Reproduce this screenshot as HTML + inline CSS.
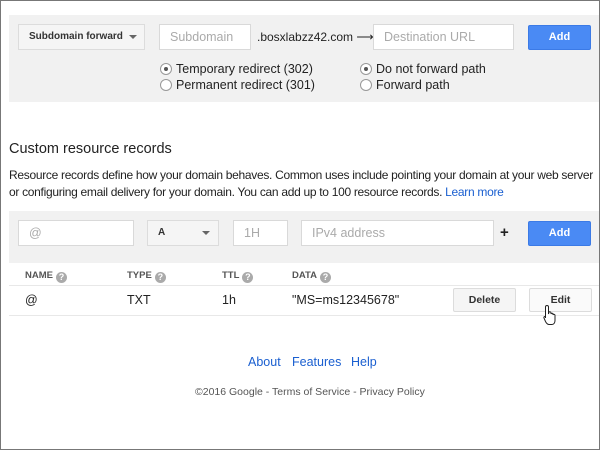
<html><head><style>
*{margin:0;padding:0;box-sizing:border-box}
body{width:600px;height:450px;background:#fff;font-family:"Liberation Sans",Arial,sans-serif;color:#222;position:relative;overflow:hidden}
.frame{position:absolute;left:0;top:0;width:600px;height:450px;border:1px solid #777;pointer-events:none}
.a{position:absolute}
.panel{background:#f1f1f1}
.inp{background:#fff;border:1px solid #d9d9d9;color:#aaa;font-size:12.5px;padding-left:10px;line-height:24px;white-space:nowrap}
.sel{background:#f5f5f5;border:1px solid #dcdcdc;font-size:10px;font-weight:bold;padding-left:10px;line-height:24px;color:#333;white-space:nowrap}
.btn{background:#4a8af4;border:1px solid #3b7ae6;color:#fff;font-size:11px;font-weight:bold;text-align:center;line-height:23px;border-radius:2px}
.gbtn{background:#f5f5f5;border:1px solid #dcdcdc;font-size:10.5px;font-weight:bold;text-align:center;line-height:23px;border-radius:2px;color:#333}
.caret{position:absolute;width:0;height:0;border-left:4px solid transparent;border-right:4px solid transparent;border-top:4px solid #666}
.t{font-size:12.5px;white-space:nowrap}
.r{position:absolute;width:12px;height:12px;border-radius:50%;border:1px solid #999;background:#fff}
.r.on::after{content:"";position:absolute;left:3px;top:3px;width:4px;height:4px;border-radius:50%;background:#555}
.h{font-size:9.5px;font-weight:bold;color:#555;white-space:nowrap}
.q{display:inline-block;width:11px;height:11px;border-radius:50%;background:#aaa;color:#fff;font-size:9px;text-align:center;line-height:11px;vertical-align:-2px;margin-left:3px}
a{color:#1a5fd0;text-decoration:none}
</style></head><body>
<div class="a panel" style="left:9px;top:15px;width:591px;height:87px"></div>
<div class="a sel" style="left:18px;top:24px;width:127px;height:26px">Subdomain forward<span class="caret" style="left:110px;top:10px"></span></div>
<div class="a inp" style="left:159px;top:24px;width:92px;height:26px">Subdomain</div>
<div class="a t" style="left:257px;top:30px;font-size:12px">.bosxlabzz42.com ⟶</div>
<div class="a inp" style="left:373px;top:24px;width:141px;height:26px">Destination URL</div>
<div class="a btn" style="left:528px;top:25px;width:63px;height:25px">Add</div>
<div class="r on" style="left:160px;top:63px"></div><div class="a t" style="left:176px;top:62px">Temporary redirect (302)</div>
<div class="r" style="left:160px;top:79px"></div><div class="a t" style="left:176px;top:78px">Permanent redirect (301)</div>
<div class="r on" style="left:360px;top:63px"></div><div class="a t" style="left:376px;top:62px">Do not forward path</div>
<div class="r" style="left:360px;top:79px"></div><div class="a t" style="left:376px;top:78px">Forward path</div>
<div class="a" style="left:9px;top:141px;font-size:14.5px">Custom resource records</div>
<div class="a" style="left:9px;top:167px;font-size:12px;line-height:17px;width:590px;letter-spacing:-0.3px"><span style="white-space:nowrap">Resource records define how your domain behaves. Common uses include pointing your domain at your web server</span><br>or configuring email delivery for your domain. You can add up to 100 resource records. <a>Learn more</a></div>
<div class="a panel" style="left:9px;top:211px;width:591px;height:52px"></div>
<div class="a inp" style="left:18px;top:220px;width:116px;height:26px">@</div>
<div class="a sel" style="left:147px;top:220px;width:72px;height:26px">A<span class="caret" style="left:54px;top:10px"></span></div>
<div class="a inp" style="left:233px;top:220px;width:55px;height:26px">1H</div>
<div class="a inp" style="left:301px;top:220px;width:193px;height:26px">IPv4 address</div>
<div class="a" style="left:500px;top:224px;font-size:15px;font-weight:bold">+</div>
<div class="a btn" style="left:528px;top:221px;width:63px;height:25px">Add</div>
<div class="a h" style="left:25px;top:270px">NAME<span class="q">?</span></div>
<div class="a h" style="left:127px;top:270px">TYPE<span class="q">?</span></div>
<div class="a h" style="left:222px;top:270px">TTL<span class="q">?</span></div>
<div class="a h" style="left:292px;top:270px">DATA<span class="q">?</span></div>
<div class="a" style="left:9px;top:285px;width:591px;border-top:1px solid #e8e8e8"></div>
<div class="a t" style="left:25px;top:293px">@</div>
<div class="a t" style="left:127px;top:293px">TXT</div>
<div class="a t" style="left:222px;top:293px">1h</div>
<div class="a t" style="left:292px;top:293px">"MS=ms12345678"</div>
<div class="a gbtn" style="left:453px;top:288px;width:63px;height:24px">Delete</div>
<div class="a gbtn" style="left:529px;top:288px;width:63px;height:24px;background:#fafafa">Edit</div>
<div class="a" style="left:9px;top:315px;width:591px;border-top:1px solid #e8e8e8"></div>
<svg class="a" style="left:543px;top:304px" width="16" height="22" viewBox="0 0 16 22"><path d="M4 1.5c1 0 1.5.6 1.5 1.5v7l.5-2c1-.5 2 0 2 1v1c.3-1 2-1 2 0v1c.3-1 2-1 2 .5v5c0 2-1 4-3 4H6c-1.5 0-2.5-1-3.5-3L1 14c-.5-1 .5-2 1.5-1L2.5 14V3c0-1 .5-1.5 1.5-1.5z" fill="#fff" stroke="#222" stroke-width="1"/></svg>
<div class="a" style="left:248px;top:355px;font-size:12.5px"><a>About</a></div>
<div class="a" style="left:292px;top:355px;font-size:12.5px"><a>Features</a></div>
<div class="a" style="left:351px;top:355px;font-size:12.5px"><a>Help</a></div>
<div class="a" style="left:195px;top:386px;font-size:10.5px;color:#555">©2016 Google - Terms of Service - Privacy Policy</div>
<div class="frame"></div>
</body></html>
